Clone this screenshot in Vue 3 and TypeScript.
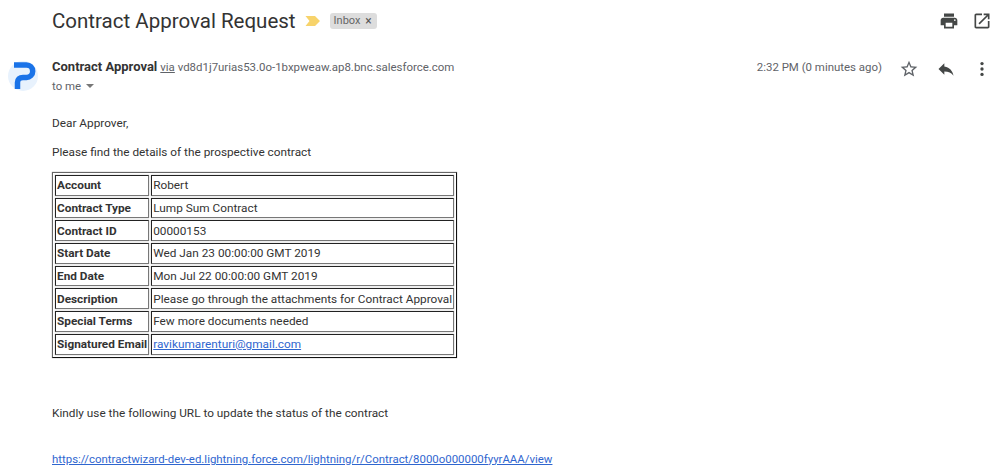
<script setup lang="ts">
const rows: [string, string][] = [
  ['Account', 'Robert'],
  ['Contract Type', 'Lump Sum Contract'],
  ['Contract ID', '00000153'],
  ['Start Date', 'Wed Jan 23 00:00:00 GMT 2019'],
  ['End Date', 'Mon Jul 22 00:00:00 GMT 2019'],
  ['Description', 'Please go through the attachments for Contract Approval'],
  ['Special Terms', 'Few more documents needed'],
]
</script>

<template>
  <div class="mail">
    <header class="subject-row">
      <h1 class="subject">Contract Approval Request</h1>
      <svg class="marker" width="16" height="12" viewBox="0 0 16 12">
        <path d="M0.5 1h9.5l5 5-5 5H0.5l4-5z" fill="#f7d36b" />
      </svg>
      <span class="label">Inbox <span class="label-x">×</span></span>
      <div class="top-actions">
        <svg width="20" height="20" viewBox="0 0 24 24" fill="#444746">
          <path d="M19 8H5c-1.66 0-3 1.34-3 3v6h4v4h12v-4h4v-6c0-1.66-1.34-3-3-3zm-3 11H8v-5h8v5zm3-7c-.55 0-1-.45-1-1s.45-1 1-1 1 .45 1 1-.45 1-1 1zm-1-9H6v4h12V3z" />
        </svg>
        <svg width="20" height="20" viewBox="0 0 24 24" fill="#444746">
          <path d="M19 19H5V5h7V3H5c-1.11 0-2 .9-2 2v14c0 1.1.89 2 2 2h14c1.1 0 2-.9 2-2v-7h-2v7zM14 3v2h3.59l-9.83 9.83 1.41 1.41L19 6.41V10h2V3h-7z" />
        </svg>
      </div>
    </header>

    <section class="sender-row">
      <svg class="avatar" width="30" height="30" viewBox="0 0 30 30">
        <circle cx="15" cy="15" r="15" fill="#e8f2fd" />
        <path d="M6 4h12.5a6.2 6.2 0 0 1 0 12.4h-3.5c-3.5 0-5.5 2-5.5 5v6.5" fill="none" stroke="#1a73e8" stroke-width="5.5" />
      </svg>
      <div class="sender-info">
        <div class="sender-line">
          <strong class="sender-name">Contract Approval</strong>
          <span class="via"><u>via</u> vd8d1j7urias53.0o-1bxpweaw.ap8.bnc.salesforce.com</span>
        </div>
        <div class="to-me">to me <i class="caret"></i></div>
      </div>
      <div class="meta">
        <span class="time">2:32 PM (0 minutes ago)</span>
        <svg class="star" width="20" height="20" viewBox="0 0 24 24" fill="#5f6368">
          <path d="M22 9.24l-7.19-.62L12 2 9.19 8.63 2 9.24l5.46 4.73L5.82 21 12 17.27 18.18 21l-1.63-7.03L22 9.24zM12 15.4l-3.76 2.27 1-4.28-3.32-2.88 4.38-.38L12 6.1l1.71 4.04 4.38.38-3.32 2.88 1 4.28L12 15.4z" />
        </svg>
        <svg class="reply" width="20" height="20" viewBox="0 0 24 24" fill="#444746">
          <path d="M10 9V5l-7 7 7 7v-4.1c5 0 8.5 1.6 11 5.1-1-5-4-10-11-11z" />
        </svg>
        <svg class="more" width="20" height="20" viewBox="0 0 24 24" fill="#444746">
          <circle cx="12" cy="5.5" r="2" />
          <circle cx="12" cy="12" r="2" />
          <circle cx="12" cy="18.5" r="2" />
        </svg>
      </div>
    </section>

    <article class="body">
      <p class="greeting">Dear Approver,</p>
      <p class="intro">Please find the details of the prospective contract</p>
      <table class="details" border="1">
        <tbody>
          <tr v-for="row in rows" :key="row[0]">
            <td><b>{{ row[0] }}</b></td>
            <td>{{ row[1] }}</td>
          </tr>
          <tr>
            <td><b>Signatured Email</b></td>
            <td><a href="#">ravikumarenturi@gmail.com</a></td>
          </tr>
        </tbody>
      </table>
      <p class="update">Kindly use the following URL to update the status of the contract</p>
      <p class="url"><a href="#">https://contractwizard-dev-ed.lightning.force.com/lightning/r/Contract/8000o000000fyyrAAA/view</a></p>
    </article>
  </div>
</template>

<style>
html, body {
  margin: 0;
  background: #fff;
  overflow: hidden;
}
</style>

<style scoped>
.mail {
  width: 1000px;
  height: 472px;
  overflow: hidden;
  font-family: Roboto, "Liberation Sans", sans-serif;
  font-size: 11.8px;
  color: #333;
  box-sizing: border-box;
}

.subject-row {
  display: flex;
  align-items: center;
  height: 28px;
  padding: 7px 8px 0 52px;
}

.subject {
  margin: 0;
  font-weight: 400;
  font-size: 20.5px;
  line-height: 28px;
  color: #333;
}

.marker {
  margin-left: 9px;
}

.label {
  margin-left: 9px;
  padding: 0 5px 0 4px;
  height: 16px;
  width: 38px;
  line-height: 16px;
  background: #ddd;
  border-radius: 3px;
  font-size: 11px;
  color: #666;
  display: flex;
  justify-content: space-between;
}

.label-x {
  color: #555;
  font-size: 12px;
}

.top-actions {
  margin-left: auto;
  display: flex;
  gap: 13px;
}

.sender-row {
  display: flex;
  margin-top: 24px;
  padding-left: 7px;
  height: 33px;
}

.avatar {
  margin-top: 2px;
  margin-left: 1px;
}

.sender-info {
  margin-left: 14px;
}

.sender-line {
  line-height: 16px;
}

.sender-name {
  font-size: 13px;
  color: #333;
}

.via {
  margin-left: 3px;
  font-size: 11.45px;
  color: #5f6368;
}

.to-me {
  margin-top: 3px;
  line-height: 16px;
  font-size: 11.45px;
  color: #5f6368;
}

.caret {
  display: inline-block;
  margin-left: 2px;
  vertical-align: 2px;
  border: 4px solid transparent;
  border-top-color: #777;
  border-bottom-width: 0;
}

.meta {
  margin-left: auto;
  display: flex;
  align-items: flex-start;
  padding-right: 8px;
}

.time {
  line-height: 16px;
  font-size: 11.45px;
  color: #5f6368;
  margin-right: 17px;
}

.star {
  margin-right: 17px;
}

.reply {
  margin-right: 16px;
}

.body {
  padding-left: 52px;
}

.body p {
  margin: 0;
  line-height: 16px;
}

.greeting {
  padding-top: 23px;
}

.intro {
  padding-top: 13px;
}

.details {
  margin-top: 12px;
  border-collapse: separate;
  border-spacing: 2px;
  border-color: #666;
  box-shadow: 0 0 1px #888;
  font-size: 11.8px;
  color: #333;
}

.details td {
  padding: 1px 1px 1px;
  line-height: 16px;
  height: 16.7px;
  white-space: nowrap;
  border-color: #777;
  box-shadow: 0 0 1px #999;
}

.body .update {
  padding-top: 47px;
}

.body .url {
  padding-top: 30px;
  font-size: 11.43px;
}

a {
  color: #2f66cf;
  text-decoration: underline;
}
</style>
